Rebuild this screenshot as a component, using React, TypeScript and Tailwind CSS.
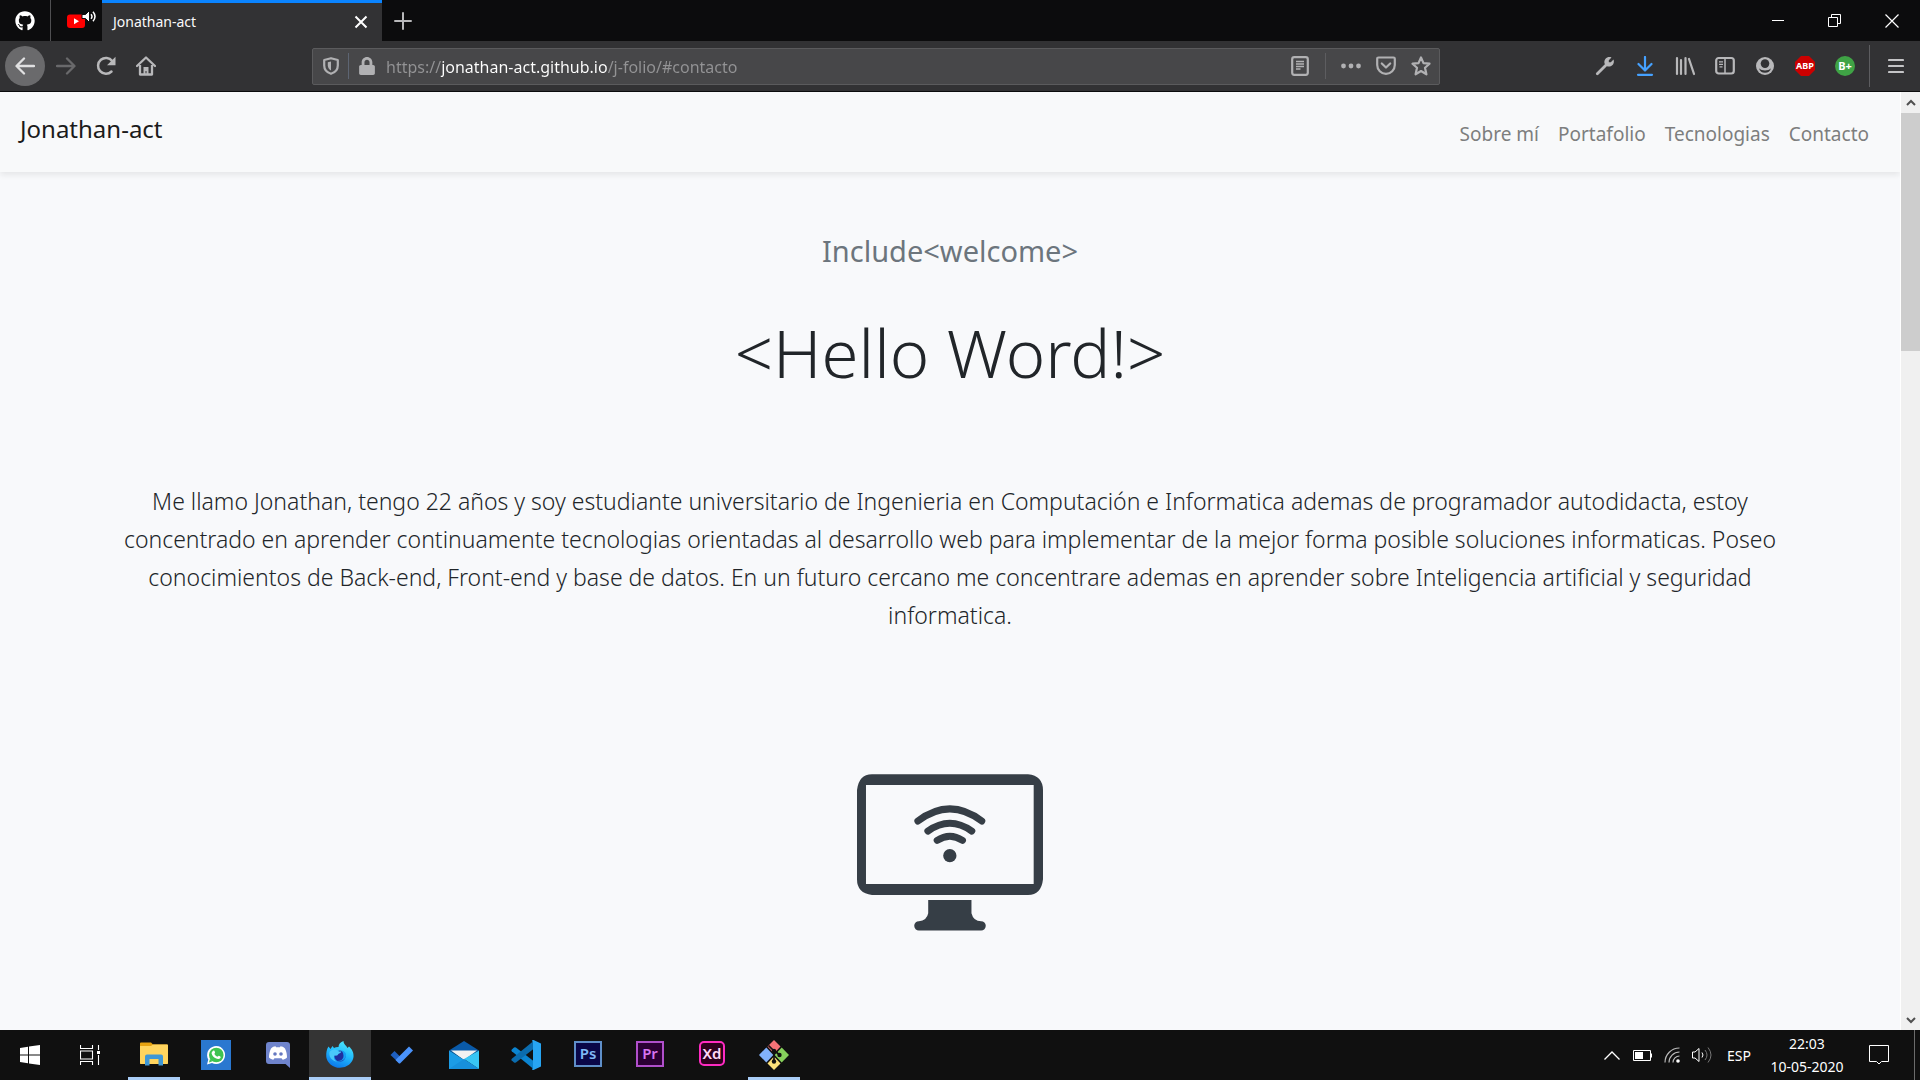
import React from "react";
import { FaGithub, FaLock } from "react-icons/fa";

type IconProps = { children: React.ReactNode; box?: string; className?: string };

function Svg({ children, box = "0 0 20 20", className = "size-5" }: IconProps) {
  return (
    <svg viewBox={box} className={className} fill="none" aria-hidden="true">
      {children}
    </svg>
  );
}

function ToolButton({ label, children }: { label: string; children: React.ReactNode }) {
  return (
    <button aria-label={label} className="flex size-10 items-center justify-center text-[#b8b8ba]">
      {children}
    </button>
  );
}

function TabStrip() {
  return (
    <header className="flex h-[41px] shrink-0 items-stretch bg-[#0c0c0d]">
      <button aria-label="GitHub" className="flex w-[51px] items-center justify-center border-r border-[#4f4f51] text-white">
        <FaGithub className="size-5" />
      </button>
      <button aria-label="YouTube" className="flex w-[51px] items-center justify-center">
        <Svg box="0 0 30 20" className="ml-[10px] h-5 w-[30px]">
          <rect x="0" y="3.500" width="18" height="13.500" rx="3" fill="#f00" />
          <path d="M7 7.200l5 3-5 3z" fill="#fff" />
          <path d="M15 3.500h3.500l4-4v12l-4-4H15z" fill="#fff" stroke="#0c0c0d" strokeWidth="1" />
          <path d="M24 3.200q2 2.300 0 4.600M26 .8q4 4.700 0 9.400" stroke="#fff" strokeWidth="1.500" />
        </Svg>
      </button>
      <div className="flex w-[280px] items-center justify-between border-t-3 border-[#0a84ff] bg-[#323234] pr-[14px] pl-[11px]">
        <span className="pb-px text-[14px] text-[#f9f9fa]">Jonathan-act</span>
        <button aria-label="Cerrar pestaña" className="flex size-[14px]">
          <Svg box="0 0 14 14" className="size-[14px]">
            <path d="M1.500 1.500l11 11M12.500 1.500l-11 11" stroke="#fff" strokeWidth="2" />
          </Svg>
        </button>
      </div>
      <button aria-label="Nueva pestaña" className="flex w-[42px] items-center justify-center">
        <Svg box="0 0 18 18" className="size-[18px]">
          <path d="M9 1v16M1 9h16" stroke="#b8b8ba" strokeWidth="2" strokeLinecap="round" />
        </Svg>
      </button>
      <div className="ml-auto flex">
        <button aria-label="Minimizar" className="flex w-[57px] items-center justify-center">
          <Svg box="0 0 12 12" className="size-3">
            <path d="M0 5.500h12" stroke="#fff" />
          </Svg>
        </button>
        <button aria-label="Restaurar" className="flex w-[57px] items-center justify-center">
          <Svg box="0 0 13 13" className="size-[13px]">
            <path d="M.5 3.500h9v9h-9zM3.500 3.500v-3h9v9h-3" stroke="#fff" />
          </Svg>
        </button>
        <button aria-label="Cerrar" className="flex w-[57px] items-center justify-center">
          <Svg box="0 0 14 14" className="size-[14px]">
            <path d="M.5 .5l13 13M13.500 .5l-13 13" stroke="#fff" strokeWidth="1.200" />
          </Svg>
        </button>
      </div>
    </header>
  );
}

function AddressBar() {
  return (
    <div className="flex h-[37px] w-[1128px] items-center rounded-[2px] border border-[#5b5b5d] bg-[#474749] text-[#b1b1b3]">
      <button aria-label="Protección" className="flex h-full w-[35px] items-center justify-center">
        <Svg box="0 0 16 18" className="h-[18px] w-4">
          <path d="M8 1.200L14.800 3v5.500c0 4-2.800 7-6.800 8.300-4-1.300-6.800-4.300-6.800-8.300V3z" stroke="currentColor" strokeWidth="2.200" strokeLinejoin="round" />
          <path d="M8 4.500v9C5.800 12.300 4.800 10.600 4.800 8.300V5.300z" fill="currentColor" />
        </Svg>
      </button>
      <span className="h-[26px] w-px bg-[#5d6573]" />
      <button aria-label="Conexión segura" className="flex h-full w-9 items-center justify-center">
        <FaLock className="h-[18px] w-4" />
      </button>
      <input
        aria-label="Dirección"
        defaultValue="https://jonathan-act.github.io/j-folio/#contacto"
        className="mr-auto min-w-0 flex-1 bg-[linear-gradient(90deg,#939395_56px,#fff_56px,#fff_223px,#939395_223px)] bg-clip-text pt-px pl-px text-[16px] text-transparent caret-white outline-none"
      />
      <button aria-label="Vista de lectura" className="mr-4 flex">
        <Svg box="0 0 18 20" className="h-5 w-[18px]">
          <rect x="1.200" y="1.200" width="15.600" height="17.600" rx="2" stroke="currentColor" strokeWidth="2.200" />
          <path d="M5 5.500h8M5 8h8M5 10.500h8M5 13h4.500" stroke="currentColor" strokeWidth="1.300" />
        </Svg>
      </button>
      <span className="h-[26px] w-px bg-[#5d5d60]" />
      <button aria-label="Acciones de página" className="ml-[15px] flex">
        <Svg>
          <g fill="currentColor">
            <circle cx="2.500" cy="10" r="2.400" />
            <circle cx="10" cy="10" r="2.400" />
            <circle cx="17.500" cy="10" r="2.400" />
          </g>
        </Svg>
      </button>
      <button aria-label="Guardar en Pocket" className="ml-[15px] flex">
        <Svg>
          <path d="M2.500 1.500h15q1.300 0 1.300 1.300V9a8.800 8.800 0 0 1-17.600 0V2.800q0-1.300 1.300-1.300z" stroke="currentColor" strokeWidth="2.200" />
          <path d="M5.800 7.500l4.200 4 4.200-4" stroke="currentColor" strokeWidth="2.200" strokeLinecap="round" strokeLinejoin="round" />
        </Svg>
      </button>
      <button aria-label="Añadir a marcadores" className="mr-2 ml-[15px] flex">
        <Svg>
          <path d="M10 1.500l2.500 5.600 6 .6-4.500 4.100 1.400 6.500L10 15l-5.400 3.300L6 11.800 1.500 7.700l6-.6z" stroke="currentColor" strokeWidth="2.200" strokeLinejoin="round" />
        </Svg>
      </button>
    </div>
  );
}

function Toolbar() {
  return (
    <div className="flex h-[51px] shrink-0 items-center border-b border-[#0c0c0d] bg-[#323234]">
      <button aria-label="Atrás" className="mr-px ml-[5px] flex size-10 items-center justify-center rounded-full bg-[#6a6a6c] text-[#e0e0e1]">
        <Svg>
          <path d="M19 10H2M9 2.500L1.500 10 9 17.500" stroke="currentColor" strokeWidth="2.300" strokeLinecap="round" strokeLinejoin="round" />
        </Svg>
      </button>
      <button aria-label="Adelante" disabled className="flex size-10 items-center justify-center text-[#69696b]">
        <Svg>
          <path d="M1 10h17M11 2.500l7.500 7.500-7.500 7.500" stroke="currentColor" strokeWidth="2.300" strokeLinecap="round" strokeLinejoin="round" />
        </Svg>
      </button>
      <ToolButton label="Recargar">
        <Svg>
          <path d="M15.500 15.500A7.900 7.900 0 1 1 16.200 5" stroke="currentColor" strokeWidth="2.500" strokeLinecap="round" />
          <path d="M19.500 .8v8.500H11z" fill="currentColor" />
        </Svg>
      </ToolButton>
      <ToolButton label="Inicio">
        <Svg>
          <path d="M1 10L10 1.500 19 10" stroke="currentColor" strokeWidth="2.300" strokeLinecap="round" strokeLinejoin="round" />
          <path d="M4 9v9.500h12V9" stroke="currentColor" strokeWidth="2.300" strokeLinejoin="round" />
          <path d="M7.500 18v-7h5v7h-2v-3h-1v3z" fill="currentColor" />
        </Svg>
      </ToolButton>
      <div className="ml-auto">
        <AddressBar />
      </div>
      <div className="ml-[145px] flex items-center">
        <ToolButton label="Herramientas">
          <Svg>
            <path d="M2.300 17.700l9-9" stroke="currentColor" strokeWidth="2.800" strokeLinecap="round" />
            <path d="M16.500 1.500C12.500 0 8.700 3 9.500 7.500l3 3c4.500.8 7.500-3 6-7L15.800 6.200H13.800V4.200z" fill="currentColor" />
          </Svg>
        </ToolButton>
        <ToolButton label="Descargas">
          <Svg>
            <path d="M10 1v13M3.500 8l6.500 6.500L16.500 8M3 18.800h14" stroke="#45a1ff" strokeWidth="2.200" strokeLinecap="round" strokeLinejoin="round" />
          </Svg>
        </ToolButton>
        <ToolButton label="Biblioteca">
          <Svg>
            <path d="M2 2v16M6 4v14M10.500 2v16M14 3l5 15" stroke="currentColor" strokeWidth="2.200" strokeLinecap="round" />
          </Svg>
        </ToolButton>
        <ToolButton label="Barra lateral">
          <Svg>
            <rect x="1.200" y="2" width="17.600" height="15.500" rx="2.500" stroke="currentColor" strokeWidth="2.200" />
            <path d="M10 2v15.500" stroke="currentColor" strokeWidth="1.500" />
            <path d="M4 5.800h4M4 8.300h4M4.500 10.800h3" stroke="currentColor" strokeWidth="1.300" />
          </Svg>
        </ToolButton>
        <ToolButton label="Cuenta">
          <Svg>
            <circle cx="10" cy="10" r="9" fill="currentColor" />
            <circle cx="10" cy="7.600" r="4.300" fill="#323234" />
            <path d="M4 12.200c1.500 1.500 3.500 2.200 6 2.200s4.500-.7 6-2.200c-.8 2.900-3 4.600-6 4.600s-5.200-1.700-6-4.600z" fill="#323234" />
          </Svg>
        </ToolButton>
        <ToolButton label="Adblock Plus">
          <span className="flex size-5 items-center justify-center bg-[#cc0000] text-[9px] font-bold text-white [clip-path:polygon(30%_0,70%_0,100%_30%,100%_70%,70%_100%,30%_100%,0_70%,0_30%)]">
            ABP
          </span>
        </ToolButton>
        <ToolButton label="B+">
          <span className="flex size-5 items-center justify-center rounded-full bg-[#3fa345] text-[11px] font-bold text-white">B+</span>
        </ToolButton>
        <span className="ml-1 h-[42px] w-px bg-[#5d5d60]" />
        <button aria-label="Menú" className="flex w-[50px] items-center justify-center pl-[2px]">
          <Svg box="0 0 16 16" className="size-4">
            <path d="M1 2h14M1 8h14M1 14h14" stroke="#c4c4c6" strokeWidth="2.200" strokeLinecap="round" />
          </Svg>
        </button>
      </div>
    </div>
  );
}

const links = [
  { label: "Sobre mí", href: "#sobre" },
  { label: "Portafolio", href: "#portafolio" },
  { label: "Tecnologias", href: "#tecnologias" },
  { label: "Contacto", href: "#contacto" },
];

function SiteNav() {
  return (
    <nav className="flex h-20 shrink-0 justify-between bg-[#f8f9fa] pr-[31px] pl-5 shadow-[0_3px_6px_rgba(0,0,0,0.08)]">
      <a href="#inicio" className="pt-5 text-[24px] leading-[34px] text-[#1b1b1b]">
        Jonathan-act
      </a>
      <ul className="flex items-center gap-[19px] pt-1 text-[19px] text-[#7d7e7e]">
        {links.map((l) => (
          <li key={l.href}>
            <a href={l.href}>{l.label}</a>
          </li>
        ))}
      </ul>
    </nav>
  );
}

function Monitor() {
  return (
    <svg viewBox="80 72 559 471" className="mx-auto mt-[140px] h-[157px] w-[186px]" fill="none" role="img" aria-label="Monitor">
      <path fill="#363e46" fillRule="evenodd" d="M125 72H594Q639 77 639 120V388Q634 435 594 435H125Q80 430 80 388V120Q85 72 125 72zM107 105V402H611V105z" />
      <path fill="#363e46" d="M294 450H424V490Q430 514 453 514A14 14 0 0 1 453 542H266A14 14 0 0 1 266 514Q290 512 294 490z" />
      <path stroke="#363e46" strokeWidth="21" strokeLinecap="round" d="M263 213Q359 140 455 213M293 243Q359 196 425 243M321 271Q359 246 397 271" />
      <circle cx="359" cy="317" r="20" fill="#363e46" />
    </svg>
  );
}

function Page() {
  return (
    <div className="flex min-h-0 flex-1 bg-[#f8f9fb]">
      <div className="flex min-w-0 flex-1 flex-col">
        <SiteNav />
        <main className="flex-1 overflow-hidden text-center">
          <p className="mt-[56px] text-[29px] leading-[46px] text-[#6c757d]">Include&lt;welcome&gt;</p>
          <h1 className="mt-[30px] text-[67px] leading-[96px] font-light text-[#212529]">&lt;Hello Word!&gt;</h1>
          <p className="mx-auto mt-[82px] max-w-[1680px] text-[23px] leading-[38px] font-light text-[#212529]">
            Me llamo Jonathan, tengo 22 años y soy estudiante universitario de Ingenieria en Computación e Informatica ademas
            de programador autodidacta, estoy concentrado en aprender continuamente tecnologias orientadas al desarrollo web
            para implementar de la mejor forma posible soluciones informaticas. Poseo conocimientos de Back-end, Front-end y
            base de datos. En un futuro cercano me concentrare ademas en aprender sobre Inteligencia artificial y seguridad
            informatica.
          </p>
          <Monitor />
        </main>
      </div>
      <div className="flex w-5 shrink-0 flex-col items-stretch border-l border-white bg-[#f0f0f0]">
        <button aria-label="Subir" className="flex h-[21px] items-center justify-center">
          <Svg box="0 0 10 8" className="h-2 w-[10px]">
            <path d="M1 6l4-4 4 4" stroke="#505050" strokeWidth="2" />
          </Svg>
        </button>
        <div className="h-[238px] bg-[#cdcdcd]" />
        <button aria-label="Bajar" className="mt-auto flex h-[21px] items-center justify-center">
          <Svg box="0 0 10 8" className="h-2 w-[10px]">
            <path d="M1 2l4 4 4-4" stroke="#505050" strokeWidth="2" />
          </Svg>
        </button>
      </div>
    </div>
  );
}

function AdobeTile({ text, className }: { text: string; className: string }) {
  return <span className={"flex items-center justify-center pb-px text-[15px] font-semibold " + className}>{text}</span>;
}

const apps: { name: string; open?: boolean; active?: boolean; icon: React.ReactNode }[] = [
  {
    name: "Explorador de archivos",
    open: true,
    icon: (
      <Svg box="0 0 28 24" className="mb-[3px] h-6 w-7">
        <path d="M0 1.500Q0 .5 1 .5h10l2 2h14q1 0 1 1V21q0 1-1 1H1q-1 0-1-1z" fill="#e6a210" />
        <path d="M0 4h11l2-1.500h14q1 0 1 1V21q0 1-1 1H1q-1 0-1-1z" fill="#ffd45e" />
        <path d="M5 23.500V14.500q0-2 2-2h14q2 0 2 2v9h-4.500V17h-9v6.500z" fill="#3f97d6" />
      </Svg>
    ),
  },
  {
    name: "WhatsApp",
    icon: (
      <Svg box="0 0 30 30" className="size-[30px]">
        <path d="M0 0h30v30H0z" fill="#2a78d0" />
        <path d="M6 24.500l1.300-5A9 9 0 1 1 11 23z" fill="#fff" />
        <circle cx="15.300" cy="15" r="7.300" fill="#3fc351" />
        <path d="M8 22.500l1-3.800 2.500 2.600z" fill="#3fc351" />
        <path d="M12 11c1-1 1.500-.3 2 1.200.3.900-.8 1-.5 1.700.6 1.300 1.500 2.100 2.800 2.700.7.300 1-1 1.600-.8 1.600.7 2.200 1 1.500 2.100-1 1.400-3 1.200-4.700.3-2-1-3.300-2.500-4-4.500-.3-1 .3-2 1.300-2.700z" fill="#fff" />
      </Svg>
    ),
  },
  {
    name: "Discord",
    icon: (
      <Svg box="0 0 24 26" className="h-[26px] w-6">
        <path d="M3 0h18q3 0 3 3v23l-4.500-4H3q-3 0-3-3V3q0-3 3-3z" fill="#6f84cc" />
        <path d="M5 6.500C6.500 5 8 4.500 9.500 4.300l.6 1h3.800l.6-1c1.500.2 3 .7 4.500 2.200 1.500 3 2 6 2 9-1.500 1.500-3 2-4.300 2.300l-1.200-1.500h-7l-1.200 1.500C6 17.500 4.500 17 3 15.500c0-3 .5-6 2-9z" fill="#fff" />
        <circle cx="9" cy="12" r="1.800" fill="#6578c0" />
        <circle cx="15" cy="12" r="1.800" fill="#6578c0" />
      </Svg>
    ),
  },
  {
    name: "Firefox",
    open: true,
    active: true,
    icon: (
      <Svg box="0 0 28 28" className="size-7">
        <defs>
          <linearGradient id="fx" x1=".7" y1="0" x2=".3" y2="1">
            <stop offset="0" stopColor="#4fe6f8" />
            <stop offset=".45" stopColor="#22bdfd" />
            <stop offset="1" stopColor="#0a74ea" />
          </linearGradient>
        </defs>
        <path d="M2.500 5.500L4.500 8l2-3 1.500 2q1.500-1 4.500-1C12.500 3 14.500 1 17.500 0c0 3.500 3 4.500 4 7L23 5.500C26 8 28 12 27.500 16A13.700 12.300 0 0 1 .3 16C0 12 .5 8.500 2.500 5.500z" fill="url(#fx)" />
        <circle cx="14" cy="15" r="5.600" fill="#1f2f9f" />
        <path d="M3.500 11c2-3 6-3.500 9.500-.5h2.500c-.5 1.800-3 2-3.500 3-.5 1.200-2 1.300-3.500 1-1.500 2 0 5 2.500 6-5-.5-8.500-4.500-7.500-9.500z" fill="#49c9fb" />
        <path d="M15.500 9.500c4 .5 5.500 4 4 7-1.500 3-5 4.200-8.500 3.500 3 .2 5.500-1 6.300-3.500.7-2.500-.3-5-1.800-7z" fill="#16a0f5" />
      </Svg>
    ),
  },
  {
    name: "To Do",
    icon: (
      <Svg box="0 0 24 20" className="h-5 w-6">
        <path d="M.5 10L4.500 6l7.500 7.500L8.500 17.500z" fill="#1e5fc0" />
        <path d="M8.500 18L5.500 15 19 1.500 23 5.500 10.500 18q-1 1-2 0z" fill="#4a93fb" />
      </Svg>
    ),
  },
  {
    name: "Correo",
    icon: (
      <Svg box="0 0 30 28" className="h-7 w-[30px]">
        <path d="M0 9.500L15 0l15 9.500-15 9z" fill="#0a5aa8" />
        <path d="M2 9.500h26L15 19z" fill="#f2f2f2" />
        <path d="M0 9.500v18.500h30z" fill="#1c9ce6" />
        <path d="M30 9.500v18.500L15 18z" fill="#38c6f5" />
        <path d="M0 28h30L15 18z" fill="#1790dc" />
      </Svg>
    ),
  },
  {
    name: "Visual Studio Code",
    icon: (
      <Svg box="0 0 30 30" className="size-[30px]">
        <path d="M.6 9.700l2.400-2.200q1-.6 1.900 0L22.500 21V29L.8 11.200q-.8-.7-.2-1.500z" fill="#0b84d0" />
        <path d="M.6 20.300L3 22.500q1 .6 1.900 0L22.500 9V1L.8 18.800q-.8.700-.2 1.500z" fill="#0b6cae" />
        <path d="M22.500 0L30 3.500v23L22.500 30q-1 .2-1.500-.8l1-1.500V2.300L21 .8q.5-1 1.500-.8z" fill="#27a5f2" />
      </Svg>
    ),
  },
  {
    name: "Photoshop",
    icon: <AdobeTile text="Ps" className="mb-[3px] h-[26px] w-7 border-2 border-[#5f8fc9] bg-[#0a0748] text-[#7fb9f7]" />,
  },
  {
    name: "Premiere",
    icon: <AdobeTile text="Pr" className="mb-[3px] h-[26px] w-7 border-2 border-[#b04fcb] bg-[#2b0034] text-[#d673f0]" />,
  },
  {
    name: "Adobe XD",
    icon: <AdobeTile text="Xd" className="mb-[3px] h-[25px] w-[26px] rounded-[5px] border-2 border-[#ff2bc2] bg-[#2e001e] text-[#ffd9f5]" />,
  },
  {
    name: "Git Bash",
    open: true,
    icon: (
      <Svg box="0 0 30 30" className="size-[30px]">
        <path d="M15 0l6.500 6.500-6.500 7-6.500-7z" fill="#f77277" />
        <path d="M7.300 7.500l7 7.500-7 7.500L0 15z" fill="#82b1fb" />
        <path d="M22.700 7.500L30 15l-7.300 7.500-7-7.500z" fill="#86d05c" />
        <path d="M15 16.500l6.500 7L15 30l-6.500-6.500z" fill="#fce07a" />
        <path d="M9.500 5.500L15 11v10M15 10l5.500 5" stroke="#111" strokeWidth="1.700" />
        <circle cx="15" cy="11" r="2.200" fill="#111" />
        <circle cx="15" cy="21.500" r="2.200" fill="#111" />
        <circle cx="20.500" cy="15" r="2.200" fill="#111" />
      </Svg>
    ),
  },
];

function Taskbar() {
  return (
    <footer className="flex h-[50px] shrink-0 items-stretch bg-[#101010] text-white">
      <button aria-label="Inicio" className="flex w-[60px] items-center justify-center">
        <Svg>
          <path d="M0 3l8-1.200V9.500H0zM9 1.600L20 0v9.500H9zM0 10.500h8v7.700L0 17zM9 10.500h11V20L9 18.400z" fill="#fff" />
        </Svg>
      </button>
      <button aria-label="Vista de tareas" className="flex w-[60px] items-center justify-center">
        <Svg>
          <path d="M.5 0v3.500h12V0M.5 20v-3.500h12V20M.5 6h12v8H.5zM18.500 0v5M18.500 10v10" stroke="#fff" strokeWidth="1.100" />
          <path d="M17 6h3v3h-3z" fill="#fff" />
        </Svg>
      </button>
      <div className="ml-[3px] flex">
        {apps.map((a) => (
          <button
            key={a.name}
            aria-label={a.name}
            className={"relative flex w-[62px] items-center justify-center " + (a.active ? "bg-[#343434]" : "")}
          >
            {a.icon}
            {a.open && <span className={"absolute bottom-0 h-[3px] bg-[#a9cdf7] " + (a.active ? "inset-x-0" : "inset-x-[5px]")} />}
          </button>
        ))}
      </div>
      <div className="ml-auto flex items-center">
        <button aria-label="Iconos ocultos" className="flex w-[30px] justify-center">
          <Svg box="0 0 16 9" className="h-[9px] w-4">
            <path d="M.5 8.500L8 1l7.500 7.500" stroke="#fff" strokeWidth="1.300" />
          </Svg>
        </button>
        <button aria-label="Batería" className="flex w-[30px] justify-center">
          <Svg box="0 0 19 11" className="h-[11px] w-[19px]">
            <path d="M.5 .5h17v10H.5zM18.500 3.500v4" stroke="#fff" />
            <path d="M2 2h8v7H2z" fill="#fff" />
          </Svg>
        </button>
        <button aria-label="Wi-Fi" className="flex w-[30px] justify-center">
          <Svg box="0 0 16 16" className="size-4">
            <g stroke="#bbb" strokeWidth="1.200">
              <path d="M1 15.500A14.500 14.500 0 0 1 15.500 1M5 15.500A10.500 10.500 0 0 1 15.500 5M9 15.500A6.500 6.500 0 0 1 15.500 9" />
            </g>
            <circle cx="14" cy="14" r="1.800" fill="#fff" />
          </Svg>
        </button>
        <button aria-label="Volumen" className="flex w-[30px] justify-center">
          <Svg box="0 0 20 18" className="h-[18px] w-5">
            <path d="M.5 6h2.500l4-3.500v13L3 12H.5z" stroke="#fff" />
            <path d="M10 6.500q2 2.500 0 5" stroke="#fff" />
            <path d="M13 4q4 5 0 10M16 1.500q6 7.500 0 15" stroke="#777" />
          </Svg>
        </button>
        <button className="w-11 text-[14px]">ESP</button>
        <button className="w-[92px] text-center text-[14px] leading-[23px]">
          <span className="block">22:03</span>
          <span className="block">10-05-2020</span>
        </button>
        <button aria-label="Notificaciones" className="flex w-[52px] justify-center">
          <Svg box="0 0 20 20" className="size-5">
            <path d="M.5 .5h19v16H12.500L10 19 7.500 16.500H.5z" stroke="#fff" />
          </Svg>
        </button>
        <span className="mr-[5px] ml-[9px] h-[50px] w-px bg-[#6b6b6b]" />
      </div>
    </footer>
  );
}

export default function App() {
  return (
    <div className="flex h-screen flex-col overflow-hidden font-['Noto_Sans','Open_Sans',sans-serif]">
      <TabStrip />
      <Toolbar />
      <Page />
      <Taskbar />
    </div>
  );
}
